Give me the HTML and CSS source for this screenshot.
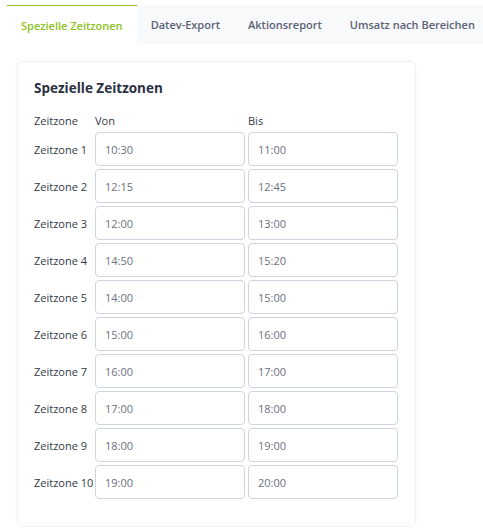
FILE: index.html
```html
<!DOCTYPE html>
<html lang="de">
<head>
<meta charset="utf-8">
<title>Spezielle Zeitzonen</title>
<link rel="stylesheet" href="styles.css">
</head>
<body>
<nav class="tabs">
  <a class="tab active">Spezielle Zeitzonen</a>
  <a class="tab">Datev-Export</a>
  <a class="tab">Aktionsreport</a>
  <a class="tab">Umsatz nach Bereichen</a>
</nav>
<section class="card">
  <h2 class="title">Spezielle Zeitzonen</h2>
  <div class="grid">
    <div class="head">Zeitzone</div><div class="head">Von</div><div class="head">Bis</div>
    <div class="label">Zeitzone 1</div><div class="field">10:30</div><div class="field">11:00</div>
    <div class="label">Zeitzone 2</div><div class="field">12:15</div><div class="field">12:45</div>
    <div class="label">Zeitzone 3</div><div class="field">12:00</div><div class="field">13:00</div>
    <div class="label">Zeitzone 4</div><div class="field">14:50</div><div class="field">15:20</div>
    <div class="label">Zeitzone 5</div><div class="field">14:00</div><div class="field">15:00</div>
    <div class="label">Zeitzone 6</div><div class="field">15:00</div><div class="field">16:00</div>
    <div class="label">Zeitzone 7</div><div class="field">16:00</div><div class="field">17:00</div>
    <div class="label">Zeitzone 8</div><div class="field">17:00</div><div class="field">18:00</div>
    <div class="label">Zeitzone 9</div><div class="field">18:00</div><div class="field">19:00</div>
    <div class="label">Zeitzone 10</div><div class="field">19:00</div><div class="field">20:00</div>
  </div>
</section>
</body>
</html>
```
FILE: styles.css
```css
html, body {
  margin: 0;
  padding: 0;
  background: #ffffff;
  overflow: hidden;
}
body {
  font-family: "Open Sans", "Noto Sans", sans-serif;
  color: #333a45;
  padding: 5px 0 0 7px;
}
.tabs {
  display: flex;
  white-space: nowrap;
  height: 39px;
}
.tab {
  display: flex;
  align-items: center;
  padding: 0 14px;
  font-size: 11px;
  font-weight: 600;
  color: #5b6275;
  background: #f8f9fb;
  flex: none;
}
.tab.active {
  background: #ffffff;
  color: #8dc21f;
  border-top: 1px solid #8dc21f;
}
.card {
  margin: 17px 0 0 10px;
  width: 399px;
  height: 466px;
  box-sizing: border-box;
  background: #fff;
  border: 1px solid #f1f2f4;
  border-radius: 6px;
  box-shadow: 0 0 4px rgba(0,0,0,0.03);
  padding: 17px 17px 20px 16px;
}
.title {
  margin: 0 0 16px 0;
  font-size: 13.5px;
  font-weight: 700;
  color: #2b3040;
  line-height: 18px;
}
.grid {
  display: grid;
  grid-template-columns: 58px 150px 150px;
  grid-template-rows: 16px;
  grid-auto-rows: 34px;
  column-gap: 3px;
  row-gap: 3px;
}
.head {
  font-size: 11px;
  line-height: 16px;
  white-space: nowrap;
}
.label {
  font-size: 11px;
  display: flex;
  align-items: center;
  white-space: nowrap;
}
.field {
  border: 1px solid #cdd5e0;
  border-radius: 4px;
  font-size: 11px;
  color: #6b7180;
  display: flex;
  align-items: center;
  padding-left: 9px;
}
```
